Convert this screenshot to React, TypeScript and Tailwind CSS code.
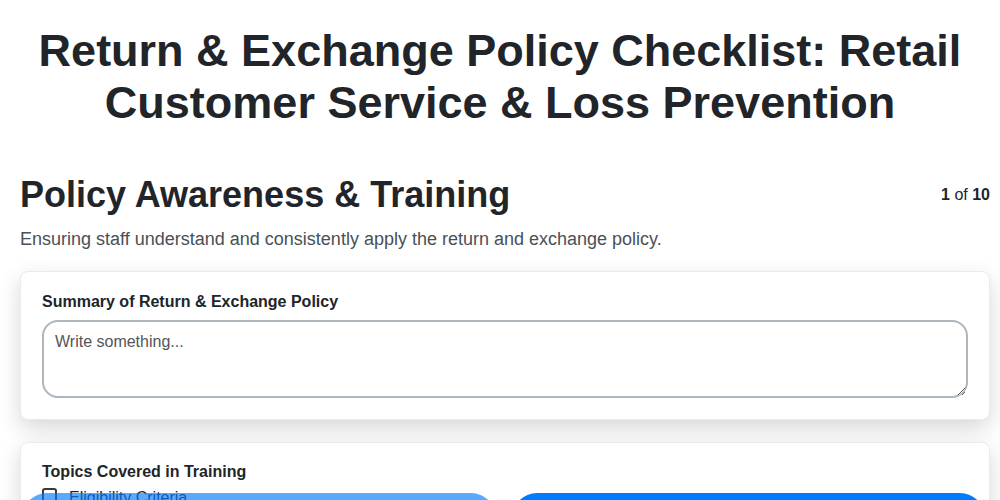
import React, { useState } from 'react';

const topics = ['Eligibility Criteria', 'Time Limits', 'Receipt Requirements', 'Refund Methods'];

export default function App() {
  const [summary, setSummary] = useState('');
  const [checked, setChecked] = useState<Record<string, boolean>>({});

  return (
    <div className="min-h-screen bg-white text-[#212529] font-['Liberation_Sans',Arial,sans-serif]">
      <div className="pl-5 pr-[10px] pt-[25px]">
        <h1 className="pr-[10px] text-center text-[45px] leading-[52px] font-bold">
          Return &amp; Exchange Policy Checklist: Retail Customer Service &amp; Loss Prevention
        </h1>

        <div className="mt-[44px] flex items-start justify-between">
          <h2 className="text-[36px] leading-[1.2] font-bold">Policy Awareness &amp; Training</h2>
          <div className="mt-[10px] text-base">
            <span className="font-bold">1</span> of <span className="font-bold">10</span>
          </div>
        </div>
        <p className="mt-[10px] text-[18px] leading-[1.5] text-[#495057]">
          Ensuring staff understand and consistently apply the return and exchange policy.
        </p>

        <div className="mt-[18px] rounded-lg border border-[#e9ecef] bg-white px-[21px] pt-[18px] pb-[21px] shadow-[0_8px_22px_rgba(0,0,0,0.16)]">
          <label className="block text-base font-bold leading-6">Summary of Return &amp; Exchange Policy</label>
          <textarea
            value={summary}
            onChange={(e) => setSummary(e.target.value)}
            placeholder="Write something..."
            className="mt-[6px] block h-[78px] w-full rounded-2xl border-2 border-[#adb5bd] px-[11px] py-[8px] text-base leading-6 placeholder:text-[#555] outline-none"
          />
        </div>

        <div className="mt-[22px] rounded-lg border border-[#e9ecef] bg-white px-[21px] pt-[17px] pb-[21px] shadow-[0_8px_22px_rgba(0,0,0,0.16)]">
          <div className="text-base font-bold leading-6">Topics Covered in Training</div>
          <div className="mt-[2px] flex flex-col gap-2">
            {topics.map((t) => (
              <label key={t} className="flex items-start gap-3 text-base leading-6">
                <input
                  type="checkbox"
                  checked={!!checked[t]}
                  onChange={() => setChecked((c) => ({ ...c, [t]: !c[t] }))}
                  className="mt-[2px] h-4 w-[15px] shrink-0 appearance-none rounded-[3px] border-2 border-[#343a40] bg-white"
                />
                {t}
              </label>
            ))}
          </div>
        </div>
      </div>

      <div className="fixed left-0 right-0 top-[493px] flex gap-[16px] pl-[22px] pr-[15px]">
        <button disabled className="h-[50px] flex-1 rounded-[25px] bg-[#007bff] text-white opacity-65 font-bold">
          Previous
        </button>
        <button className="h-[50px] flex-1 rounded-[25px] bg-[#007bff] text-white font-bold">Next</button>
      </div>
    </div>
  );
}
